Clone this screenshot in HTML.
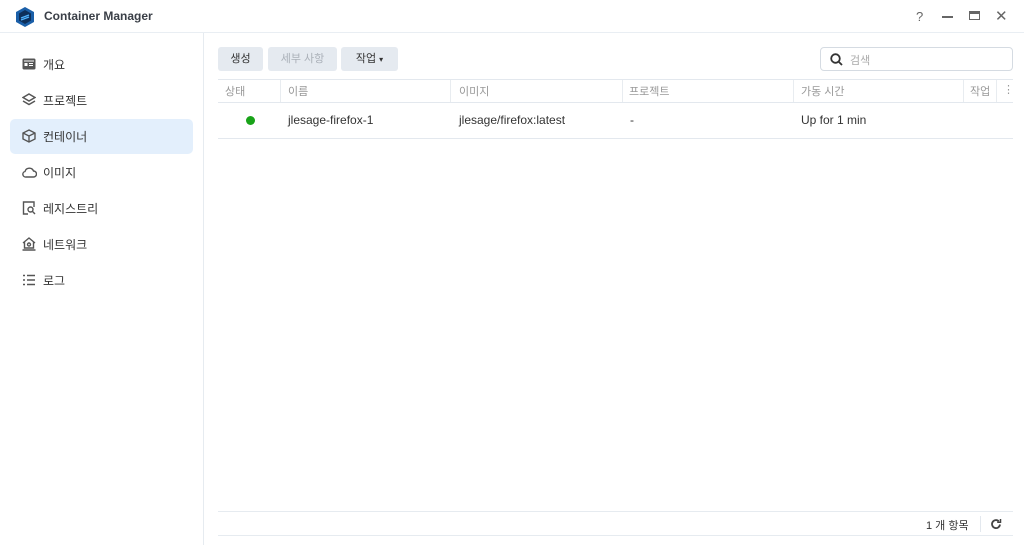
<!DOCTYPE html>
<html><head><meta charset="utf-8"><style>
*{box-sizing:border-box;margin:0;padding:0}
body{width:1024px;height:545px;background:#fff;font-family:"Liberation Sans","Noto Sans CJK KR",sans-serif;color:#333;position:relative;overflow:hidden;font-size:12px}
.title{position:absolute;left:0;top:0;width:1024px;height:33px;border-bottom:1px solid #e9eef3}
.title .t{position:absolute;left:44px;top:9px;font-weight:bold;font-size:12px;color:#3a3f47}
.side{position:absolute;left:0;top:33px;width:204px;height:512px;border-right:1px solid #e6ebf0}
.item{position:absolute;left:10px;width:183px;height:35px;border-radius:5px;font-size:12px;color:#333}
.item span{position:absolute;left:33px;top:9px}
.item svg{position:absolute;left:12px;top:10px}
.sel{background:#e3effc}
.btn{position:absolute;top:47px;height:24px;border-radius:3px;background:#e5eaf0;font-size:11px;text-align:center;line-height:24px;color:#333}
.th{position:absolute;top:79px;height:24px;border-top:1px solid #e3e8ee;border-bottom:1px solid #e3e8ee;left:218px;width:795px}
.th div{position:absolute;top:3px;color:#999;font-size:11px}
.th .vl{position:absolute;top:0;width:1px;height:22px;background:#e8ecf0}
.row{position:absolute;top:103px;height:36px;left:218px;width:795px;border-bottom:1px solid #e3e8ee}
.row div{position:absolute;top:10px;font-size:12px;color:#333}
</style></head><body>
<div class="title">
<svg style="position:absolute;left:16px;top:7px" width="18" height="20" viewBox="0 0 18 20"><path d="M9 0L18 5V15L9 20L0 15V5Z" fill="#1a5fa8"/><path d="M9 3L15 6.5V13.5L9 17L3 13.5V6.5Z" fill="#0d2f5a"/><path d="M5 11L13 8M5 13L13 10" stroke="#4fb3ff" stroke-width="1.3"/></svg>
<div class="t">Container Manager</div>
<div style="position:absolute;left:916px;top:9px;color:#666;font-size:13px">?</div>
<div style="position:absolute;left:942px;top:16px;width:11px;height:1.5px;background:#666"></div>
<div style="position:absolute;left:969px;top:11px;width:11px;height:9px;border:1.5px solid #666;border-top-width:3px"></div>
<div style="position:absolute;left:995px;top:7px;color:#666;font-size:15px">✕</div>
</div>
<div class="side">
<div class="item" style="top:14px"><svg width="14" height="14" viewBox="0 0 14 14"><rect x="0.5" y="1.5" width="13" height="11" rx="1.5" fill="#555"/><rect x="2.5" y="6" width="3" height="3" fill="#fff"/><path d="M7 6.5h4M7 8.5h4M2 4h10" stroke="#fff" stroke-width="1"/></svg><span>개요</span></div>
<div class="item" style="top:50px"><svg width="14" height="14" viewBox="0 0 14 14" fill="none" stroke="#555" stroke-width="1.5"><path d="M7 1L13 4.5L7 8L1 4.5Z"/><path d="M1 8L7 11.5L13 8"/></svg><span>프로젝트</span></div>
<div class="item sel" style="top:86px"><svg width="14" height="14" viewBox="0 0 14 14" fill="none" stroke="#555" stroke-width="1.4"><path d="M7 1L13 4V10L7 13L1 10V4Z"/><path d="M1 4L7 7L13 4M7 7V13"/></svg><span>컨테이너</span></div>
<div class="item" style="top:122px"><svg width="15" height="14" viewBox="0 0 15 14" fill="none" stroke="#555" stroke-width="1.4"><path d="M4 12H11.5A3 3 0 0 0 11.5 6A4.5 4.5 0 0 0 3 6.5A2.8 2.8 0 0 0 4 12Z"/></svg><span>이미지</span></div>
<div class="item" style="top:158px"><svg width="14" height="14" viewBox="0 0 14 14" fill="none" stroke="#555" stroke-width="1.4"><path d="M6 13H1.5V1H12V6"/><circle cx="8.5" cy="8.5" r="2.5"/><path d="M10.3 10.3L13 13"/></svg><span>레지스트리</span></div>
<div class="item" style="top:194px"><svg width="14" height="14" viewBox="0 0 14 14" fill="none" stroke="#555" stroke-width="1.4"><path d="M1 6L7 1L13 6M2.5 5V11H11.5V5M0.5 13H13.5"/><circle cx="7" cy="7.5" r="1.5"/></svg><span>네트워크</span></div>
<div class="item" style="top:230px"><svg width="14" height="14" viewBox="0 0 14 14" stroke="#555" stroke-width="1.5"><path d="M1 2.5h2M5 2.5h8M1 7h2M5 7h8M1 11.5h2M5 11.5h8"/></svg><span>로그</span></div>
</div>
<div class="btn" style="left:218px;width:45px">생성</div>
<div class="btn" style="left:268px;width:69px;color:#aab0b8">세부 사항</div>
<div class="btn" style="left:341px;width:57px">작업 <span style="font-size:8px">▾</span></div>
<div style="position:absolute;left:820px;top:47px;width:193px;height:24px;border:1px solid #d5dbe2;border-radius:4px">
<svg style="position:absolute;left:9px;top:5px" width="13" height="13" viewBox="0 0 13 13" fill="none" stroke="#333" stroke-width="1.8"><circle cx="5.5" cy="5.5" r="4.3"/><path d="M8.7 8.7L12 12"/></svg>
<span style="position:absolute;left:29px;top:4px;color:#aaa;font-size:11px">검색</span></div>
<div class="th">
<div style="left:7px">상태</div><div class="vl" style="left:62px"></div>
<div style="left:70px">이름</div><div class="vl" style="left:232px"></div>
<div style="left:241px">이미지</div><div class="vl" style="left:404px"></div>
<div style="left:411px">프로젝트</div><div class="vl" style="left:575px"></div>
<div style="left:583px">가동 시간</div><div class="vl" style="left:745px"></div>
<div style="left:752px">작업</div><div class="vl" style="left:778px"></div>
<div style="left:785px">⋮</div>
</div>
<div class="row">
<div style="left:28px;top:13px;width:9px;height:9px;border-radius:50%;background:#19a319"></div>
<div style="left:70px">jlesage-firefox-1</div>
<div style="left:241px">jlesage/firefox:latest</div>
<div style="left:412px">-</div>
<div style="left:583px">Up for 1 min</div>
</div>
<div style="position:absolute;left:218px;top:511px;width:795px;height:25px;border-top:1px solid #e6ebf0;border-bottom:1px solid #e6ebf0">
<span style="position:absolute;left:708px;top:5px;font-size:11px;color:#333">1 개 항목</span>
<div style="position:absolute;left:762px;top:4px;width:1px;height:16px;background:#e3e8ee"></div>
<svg style="position:absolute;left:772px;top:6px" width="12" height="12" viewBox="0 0 12 12" fill="none" stroke="#444" stroke-width="1.8"><path d="M10 6.5A4 4 0 1 1 8.8 3.2"/><path d="M10.5 1V4.3H7.2" stroke-width="1.5"/></svg>
</div>
</body></html>
